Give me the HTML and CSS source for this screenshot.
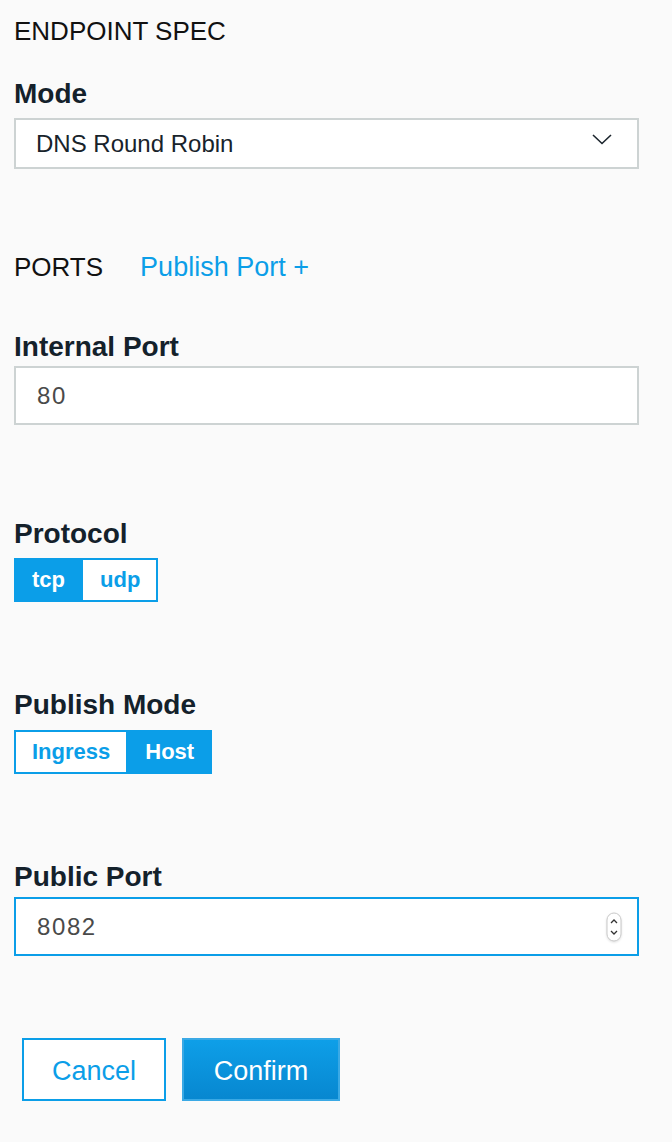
FILE: index.html
```html
<!DOCTYPE html>
<html>
<head>
<meta charset="utf-8">
<link rel="stylesheet" href="styles.css">
</head>
<body>
<div class="page">
  <h2 class="section-title first">ENDPOINT SPEC</h2>
  <label class="label label-mode">Mode</label>
  <div class="select">
    <span class="select-value">DNS Round Robin</span>
    <svg class="chevron" width="20" height="11" viewBox="0 0 20 11"><path d="M1 1 L10 9.5 L19 1" fill="none" stroke="#1b252d" stroke-width="1.6"/></svg>
  </div>

  <div class="ports-row">
    <span class="section-title">PORTS</span>
    <a class="link">Publish Port +</a>
  </div>

  <label class="label label-internal">Internal Port</label>
  <div class="field">
    <input class="field-input" type="text" value="80">
  </div>

  <label class="label label-protocol">Protocol</label>
  <div class="toggle">
    <span class="seg active">tcp</span><span class="seg">udp</span>
  </div>

  <label class="label label-publish">Publish Mode</label>
  <div class="toggle">
    <span class="seg">Ingress</span><span class="seg active">Host</span>
  </div>

  <label class="label label-public">Public Port</label>
  <div class="field focused">
    <input class="field-input" type="text" value="8082">
    <svg class="spinner" width="16" height="30" viewBox="0 0 16 30">
      <rect x="1" y="1" width="14" height="28" rx="7" ry="7" fill="#fff" stroke="#c9c9c9" stroke-width="1"/>
      <path d="M5 11 L8 8 L11 11" fill="none" stroke="#333" stroke-width="1.3"/>
      <path d="M5 19 L8 22 L11 19" fill="none" stroke="#333" stroke-width="1.3"/>
    </svg>
  </div>

  <div class="actions">
    <button class="btn btn-outline">Cancel</button>
    <button class="btn btn-primary">Confirm</button>
  </div>
</div>
</body>
</html>
```

FILE: styles.css
```css
html, body {
  margin: 0;
  padding: 0;
  background: #fafafa;
}

.page {
  padding: 0 33px 0 14px;
  font-family: "Liberation Sans", Arial, sans-serif;
  display: flex;
  flex-direction: column;
  align-items: flex-start;
}

.section-title {
  font-size: 26px;
  line-height: 30px;
  font-weight: normal;
  color: #111;
  margin: 0;
}

.section-title.first {
  margin-top: 16px;
}

.label {
  display: block;
  font-size: 28px;
  line-height: 32px;
  font-weight: bold;
  color: #14212b;
}

.label-mode { margin-top: 32px; margin-bottom: 8px; }
.label-internal { margin-top: 49px; margin-bottom: 3px; }
.label-protocol { margin-top: 93px; margin-bottom: 8px; }
.label-publish { margin-top: 87px; margin-bottom: 9px; }
.label-public { margin-top: 87px; margin-bottom: 4px; }

.select {
  box-sizing: border-box;
  width: 625px;
  height: 51px;
  border: 2px solid #cdd3d3;
  background: #fff;
  display: flex;
  align-items: center;
  justify-content: space-between;
  padding: 0 25px 0 20px;
}

.select-value {
  font-size: 24px;
  color: #18232b;
}

.chevron {
  display: block;
  margin-top: -8px;
}

.ports-row {
  margin-top: 83px;
  display: flex;
  align-items: baseline;
  gap: 37px;
}

.link {
  font-size: 27px;
  line-height: 30px;
  color: #0b9ee8;
  cursor: pointer;
}

.field {
  box-sizing: border-box;
  width: 625px;
  height: 59px;
  border: 2px solid #cdd3d3;
  background: #fff;
  display: flex;
  align-items: center;
  padding: 0 15px 0 21px;
}

.field.focused {
  border-color: #0b9ee8;
}

.field-input {
  flex: 1;
  border: none;
  outline: none;
  background: transparent;
  padding: 0;
  font-family: "Liberation Sans", Arial, sans-serif;
  font-size: 24px;
  letter-spacing: 1.6px;
  color: #4a4a4a;
}

.spinner {
  display: block;
  filter: drop-shadow(0 1px 1px rgba(0,0,0,0.12));
}

.toggle {
  display: flex;
}

.seg {
  box-sizing: border-box;
  height: 44px;
  padding: 0 16px;
  border: 2px solid #0b9ee8;
  background: #fff;
  color: #0b9ee8;
  font-size: 22px;
  font-weight: bold;
  display: flex;
  align-items: center;
}

.seg + .seg {
  border-left: none;
  padding-left: 17px;
}

.seg.active {
  background: #0b9ee8;
  color: #fff;
}

.actions {
  margin-top: 82px;
  margin-left: 8px;
  display: flex;
  gap: 16px;
}

.btn {
  box-sizing: border-box;
  height: 63px;
  padding: 3px 0 0;
  font-family: "Liberation Sans", Arial, sans-serif;
  font-size: 27px;
  border: 2px solid #0b9ee8;
  cursor: pointer;
  display: flex;
  align-items: center;
  justify-content: center;
}

.btn-outline {
  width: 144px;
  background: #fff;
  color: #0b9ee8;
}

.btn-primary {
  width: 158px;
  background: linear-gradient(#0e9fe8, #0787d0);
  border-color: #3aa9e5;
  color: #fff;
}
```
